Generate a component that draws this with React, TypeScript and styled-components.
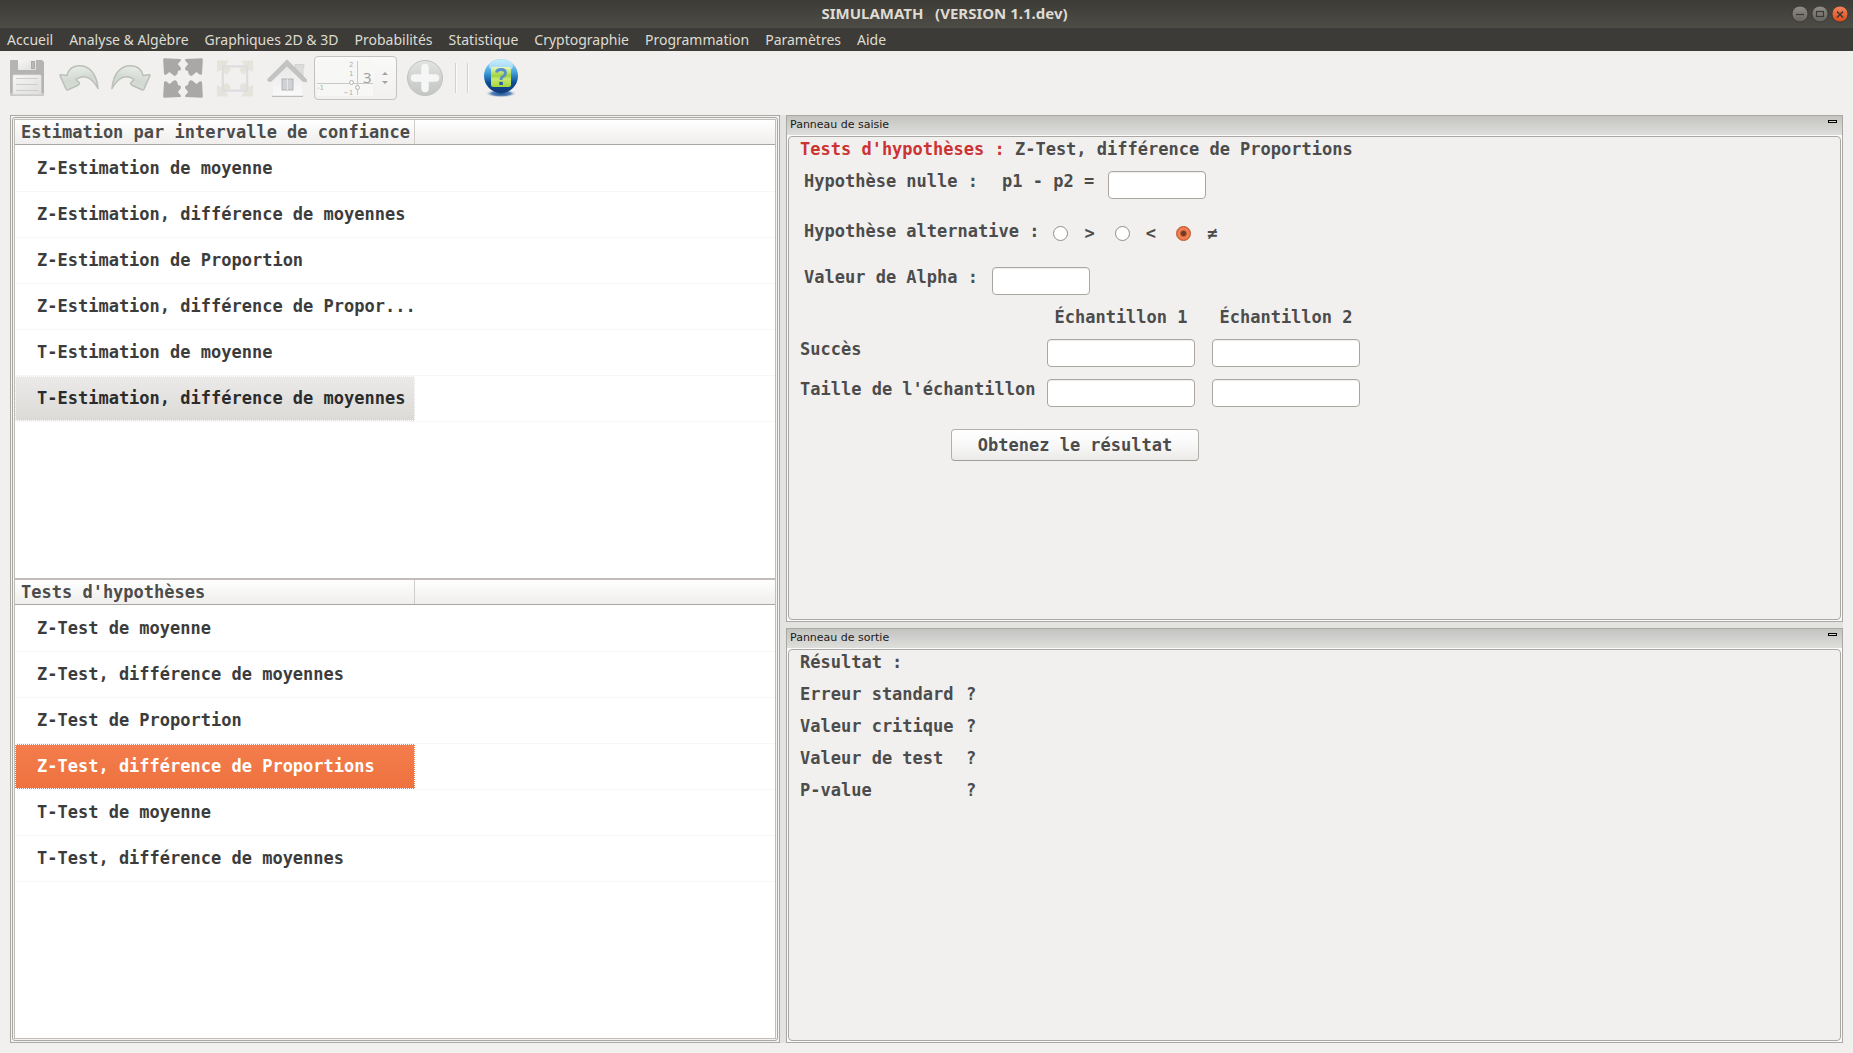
import React, { useState } from "react";
import styled, { createGlobalStyle, css } from "styled-components";

const GlobalStyle = createGlobalStyle`
  *, *::before, *::after { box-sizing: border-box; }
  body { margin: 0; background: #f1f0ee; }
  button, input { font: inherit; color: inherit; margin: 0; }
`;

const MONO = `"DejaVu Sans Mono", "Liberation Mono", monospace`;
const UI = `"Noto Sans", "Open Sans", sans-serif`;

const Window = styled.div`
  display: flex;
  flex-direction: column;
  min-height: 100vh;
  background: #f1f0ee;
  color: #4c4c4c;
  font: bold 17px/20px ${MONO};
`;

const TitleBar = styled.header`
  display: flex;
  align-items: center;
  height: 28px;
  padding: 0 4px 0 98px;
  background: linear-gradient(#3c3b37, #4d4c45);
`;

const Title = styled.h1`
  flex: 1;
  margin: 0;
  padding-bottom: 2px;
  color: #dfdbd2;
  font: bold 15px/20px ${UI};
  text-align: center;
  white-space: pre;
`;

const WindowButtons = styled.div`
  display: flex;
  gap: 2px;
`;

const WindowButton = styled.button`
  width: 18px;
  height: 18px;
  padding: 0;
  border: 0;
  background: none;
  svg { display: block; }
`;

const MenuBar = styled.nav`
  display: flex;
  gap: 16px;
  height: 23px;
  padding: 0 7px;
  background: #3c3b37;
`;

const MenuItem = styled.button`
  padding: 0;
  border: 0;
  background: none;
  color: #dfdbd2;
  font: 14px/23px ${UI};
  white-space: nowrap;
`;

const ToolBar = styled.div`
  display: flex;
  align-items: center;
  height: 54px;
  padding-left: 1px;
`;

const ToolButton = styled.button`
  display: flex;
  align-items: center;
  justify-content: center;
  width: 52px;
  height: 48px;
  padding: 0;
  border: 0;
  background: none;
`;

const Separator = styled.span`
  width: 2px;
  height: 30px;
  margin-left: 4px;
  margin-right: 6px;
  border-left: 1px solid #d3d1ce;
  border-right: 1px solid #fbfbfa;
`;

const SpinBox = styled.div`
  display: flex;
  align-items: center;
  width: 83px;
  height: 44px;
  margin: 0 2px 0 1px;
  border: 1px solid #c4c2bf;
  border-radius: 4px;
  background: linear-gradient(#fafafa, #f1f0ee);
`;

const SpinInput = styled.input`
  width: 66px;
  height: 40px;
  padding: 0 0 2px 48px;
  border: 0;
  background: none;
  color: #a5a29f;
  font: 15px/20px ${UI};
`;

const SpinField = styled.div`
  display: grid;
  width: 66px;
  & > * { grid-area: 1 / 1; }
`;

const Workspace = styled.main`
  flex: 1;
  display: grid;
  grid-template-columns: 770fr 1057fr;
  gap: 6px;
  margin: 10px;
  background: #e3e3e1;
`;

const Outline = styled.section`
  display: flex;
  padding: 1px;
  border: 1px solid #a9a8a4;
  background: #f4f3f2;
`;

const Frame = styled.div`
  flex: 1;
  display: flex;
  padding: 1px;
  border: 1px solid #a9a8a4;
  border-radius: 3px;
`;

const Lists = styled.div`
  flex: 1;
  display: flex;
  flex-direction: column;
  gap: 2px;
  border: 1px solid #c2bdb9;
  background: #c2bdb9;
`;

const Tree = styled.section`
  flex: 1 1 0;
  background: #ffffff;
`;

const TreeHeader = styled.header`
  display: flex;
  height: 25px;
  border-bottom: 1px solid #a9a6a2;
  background: linear-gradient(#ffffff, #efeeec);
`;

const HeaderTitle = styled.h2`
  width: 400px;
  margin: 0;
  padding-left: 6px;
  border-right: 1px solid #cfcdca;
  font: inherit;
  line-height: 24px;
  white-space: nowrap;
`;

const TreeItems = styled.ul`
  margin: 0;
  padding: 1px 0 0;
  list-style: none;
`;

const TreeItem = styled.li`
  height: 46px;
  border-bottom: 1px solid #f7f7f6;
`;

type Tone = "none" | "idle" | "active";

const tones = {
  none: css`
    background: none;
    color: #3c3c3c;
  `,
  idle: css`
    background: linear-gradient(#ebeae9, #dbdad7);
    color: #2c2c2c;
    outline: 1px dotted #ffffff;
  `,
  active: css`
    background: linear-gradient(#f47d4d, #ed723f);
    color: #ffffff;
    outline: 1px dotted #ffffff;
  `,
};

const TreeButton = styled.button<{ $tone: Tone }>`
  display: block;
  width: 400px;
  height: 45px;
  padding: 0 0 2px 22px;
  border: 0;
  text-align: left;
  white-space: nowrap;
  outline-offset: -1px;
  ${(p) => tones[p.$tone]}
`;

const Docks = styled.div`
  display: flex;
  flex-direction: column;
  gap: 6px;
`;

const DockBox = styled.section<{ $share: number }>`
  flex: ${(p) => p.$share} 1 0;
  display: flex;
  flex-direction: column;
  border: 1px solid #a9a8a4;
  background: #fbfbfb;
`;

const DockTitle = styled.header`
  display: flex;
  justify-content: space-between;
  height: 19px;
  padding: 0 5px 0 3px;
  background: linear-gradient(#c3c3c0, #dededc);
`;

const DockName = styled.h2`
  margin: 0;
  color: #1a1a1a;
  font: 11px/18px "DejaVu Sans", sans-serif;
`;

const Collapse = styled.button`
  width: 9px;
  height: 3px;
  margin-top: 4px;
  padding: 0;
  border: 1px solid #000000;
  background: #dcdcdc;
`;

const DockBody = styled.div`
  flex: 1;
  margin: 1px;
  padding: 2px 11px;
  border: 1px solid #a9a8a4;
  border-radius: 4px;
  background: #f1f0ee;
`;

const Form = styled.form`
  display: flex;
  flex-direction: column;
  gap: 12px;
`;

const FormTitle = styled.h3`
  margin: 0;
  font: inherit;
`;

const Accent = styled.span`
  color: #cc3333;
`;

const Hypotheses = styled.div`
  display: flex;
  flex-direction: column;
  gap: 20px;
  padding-left: 4px;
`;

const Line = styled.div`
  display: flex;
  align-items: flex-start;
  gap: 14px;
  height: 28px;
`;

const LineLabel = styled.label`
  display: flex;
  gap: 24px;
`;

const GroupLabel = styled.span`
  line-height: 24px;
`;

const TextBox = styled.input<{ $wide?: boolean }>`
  width: ${(p) => (p.$wide ? 148 : 98)}px;
  height: 28px;
  padding: 0 6px;
  border: 1px solid #aaa7a3;
  border-radius: 4px;
  background: #ffffff;
  box-shadow: inset 0 1px 1px #eeedeb;
  outline: 0;
`;

const RadioGroup = styled.div`
  display: flex;
  gap: 20px;
`;

const RadioLabel = styled.label`
  display: flex;
  align-items: center;
  gap: 16px;
  height: 28px;
`;

const Radio = styled.input`
  appearance: none;
  width: 15px;
  height: 15px;
  border: 1px solid #8f8c88;
  border-radius: 50%;
  background: #ffffff;
  &:checked {
    border-color: #b9502a;
    background: radial-gradient(circle, #74371f 0 2px, #f48457 4px, #ee7646 6px);
  }
`;

const SampleGrid = styled.div`
  display: grid;
  grid-template-columns: 230px 148px 148px;
  gap: 12px 17px;
  white-space: nowrap;
`;

const SampleHead = styled.span`
  text-align: center;
`;

const Actions = styled.div`
  display: flex;
  padding: 10px 0 0 151px;
`;

const Submit = styled.button`
  width: 248px;
  height: 32px;
  padding: 0;
  border: 1px solid #b4b1ad;
  border-bottom-color: #a09d99;
  border-radius: 4px;
  background: linear-gradient(#ffffff, #f8f8f8 50%, #ebeae8);
`;

const Results = styled.dl`
  display: grid;
  grid-template-columns: 150px 1fr;
  gap: 12px 16px;
  margin: 12px 0 0;
  white-space: nowrap;
`;

const Term = styled.dt``;

const Value = styled.dd`
  margin: 0;
`;

const MENUS = [
  "Accueil",
  "Analyse & Algèbre",
  "Graphiques 2D & 3D",
  "Probabilités",
  "Statistique",
  "Cryptographie",
  "Programmation",
  "Paramètres",
  "Aide",
];

const ESTIMATIONS = [
  "Z-Estimation de moyenne",
  "Z-Estimation, différence de moyennes",
  "Z-Estimation de Proportion",
  "Z-Estimation, différence de Propor...",
  "T-Estimation de moyenne",
  "T-Estimation, différence de moyennes",
];

const TESTS = [
  "Z-Test de moyenne",
  "Z-Test, différence de moyennes",
  "Z-Test de Proportion",
  "Z-Test, différence de Proportions",
  "T-Test de moyenne",
  "T-Test, différence de moyennes",
];

const RESULTS = ["Erreur standard", "Valeur critique", "Valeur de test", "P-value"];

function WindowIcon({ kind }: { kind: "min" | "max" | "close" }) {
  const close = kind === "close";
  return (
    <svg width="18" height="18" viewBox="0 0 18 18">
      <defs>
        <linearGradient id={`wb-${kind}`} x1="0" y1="0" x2="0" y2="1">
          <stop offset="0" stopColor={close ? "#f58561" : "#908e87"} />
          <stop offset="1" stopColor={close ? "#dc4a16" : "#65635c"} />
        </linearGradient>
      </defs>
      <circle cx="9" cy="9" r="8" fill={`url(#wb-${kind})`} stroke="#35342f" strokeWidth="0.8" />
      <g stroke="#3a3935" strokeWidth="1.2" fill="none">
        {kind === "min" && <path d="M5 9.5h8" />}
        {kind === "max" && <rect x="5.5" y="6.5" width="7" height="5" />}
        {close && <path d="M6 6.5l6 6M12 6.5l-6 6" strokeWidth="1.6" />}
      </g>
    </svg>
  );
}

function SaveIcon() {
  return (
    <svg width="36" height="38" viewBox="0 0 36 38">
      <defs>
        <linearGradient id="save-paper" x1="0" y1="0" x2="1" y2="1">
          <stop offset="0" stopColor="#f6f6f6" />
          <stop offset="1" stopColor="#dededd" />
        </linearGradient>
      </defs>
      <path d="M1 2q0-1 1-1h31l2 2v33q0 1-1 1H2q-1 0-1-1z" fill="#b5b4b2" />
      <path d="M1 34h34v2q0 1-1 1H2q-1 0-1-1z" fill="#cccac8" />
      <path d="M9 1h18v10H10q-1 0-1-1z" fill="url(#save-paper)" />
      <rect x="22.5" y="2.5" width="3" height="7" fill="#b9b8b7" stroke="#a3a2a1" strokeWidth="0.8" />
      <rect x="4" y="16" width="28" height="19" rx="1" fill="url(#save-paper)" stroke="#e8e8e8" strokeWidth="0.6" />
      <path d="M7 19.5h22M7 25.5h22M7 31.5h22" stroke="#cecdcc" />
    </svg>
  );
}

function UndoIcon({ flip = false }: { flip?: boolean }) {
  const id = flip ? "redo-fill" : "undo-fill";
  return (
    <svg width="40" height="28" viewBox="0 0 40 28">
      <defs>
        <linearGradient id={id} x1="0.2" y1="0" x2="0.5" y2="1">
          <stop offset="0" stopColor="#ecefec" />
          <stop offset="0.6" stopColor="#d2d9d1" />
          <stop offset="1" stopColor="#d8ddd7" />
        </linearGradient>
      </defs>
      <path
        transform={flip ? "matrix(-1 0 0 1 40 0)" : undefined}
        d="M39 24.5C37.500 8 29 1.500 20 1.800C14 2 9.500 5 8 11.500L1.500 10.800Q.8 11 1.200 12L7 25Q7.600 26.300 9 25.800L18.500 21.500Q20.500 20.500 20.500 19L17 15.500C24.500 9.500 33 13.500 39 24.500Z"
        fill={`url(#${id})`}
        stroke="#babfb9"
        strokeWidth="1.500"
        strokeLinejoin="round"
      />
    </svg>
  );
}

const CORNER =
  "M1 .3L17.500 1Q18.500 1.800 17.500 3L14.800 6L17.800 9.800Q18.400 11.500 17.200 12.300L15 13L14.300 16L12.600 17.700Q11.500 18.200 10.400 17.200L6.500 14L3.500 16.500Q1.500 17.500 1 15.800L.2 2Q.2.500 1 .3Z";
const QUARTERS = [
  undefined,
  "matrix(-1 0 0 1 40 0)",
  "matrix(1 0 0 -1 0 40)",
  "matrix(-1 0 0 -1 40 40)",
];

function ExpandIcon() {
  return (
    <svg width="40" height="40" viewBox="0 0 40 40" fill="#a9a8a7">
      {QUARTERS.map((t, i) => (
        <path key={i} d={CORNER} transform={t} />
      ))}
    </svg>
  );
}

function FitIcon() {
  return (
    <svg width="36" height="37" viewBox="0 0 40 40">
      <g fill="#e5e4da">
        {QUARTERS.map((t, i) => (
          <path key={i} transform={t} d="M0 0H13L10.500 4L11 6L15.500 9.500L13 14L9.500 15.500L6 11L4 10.500L0 13Z" />
        ))}
      </g>
      <rect x="6.5" y="6.5" width="27" height="27" fill="none" stroke="#dddde0" strokeWidth="2.4" />
    </svg>
  );
}

function HomeIcon() {
  return (
    <svg width="40" height="38" viewBox="0 0 40 38">
      <defs>
        <linearGradient id="home-wall" x1="0" y1="0" x2="0" y2="1">
          <stop offset="0" stopColor="#e6e6e6" />
          <stop offset="1" stopColor="#fafafa" />
        </linearGradient>
      </defs>
      <path d="M28 5.500h9v3h-1v11l-8-8z" fill="#dcdcdb" stroke="#cfcfce" strokeWidth="0.8" />
      <path d="M6 20L20 5L35 20V37H6Z" fill="url(#home-wall)" />
      <path d="M5 37.500h31" stroke="#bdbdbc" strokeWidth="1.500" />
      <path d="M20 .8L39.500 20.500V23L36 22.500L20 7L4 22.500L.8 22V20Z" fill="#c3c3c2" stroke="#b8b8b7" strokeWidth="0.6" />
      <rect x="15" y="20" width="11" height="11" fill="#cfd1d4" stroke="#b3b3b2" />
      <path d="M20.500 20v11" stroke="#e8e8e8" />
    </svg>
  );
}

function AxesPicture() {
  return (
    <svg width="66" height="40" viewBox="0 0 66 40">
      <rect x="2" y="2" width="56" height="36" fill="#f7f7f6" />
      <g stroke="#c9c9c9" fill="none">
        <path d="M2 25.500h56M42.500 3v34" />
        <circle cx="36.500" cy="24.500" r="2" fill="#f7f7f6" stroke="#b5b5b5" />
        <circle cx="42.500" cy="29.500" r="2" fill="#f7f7f6" stroke="#b5b5b5" />
      </g>
      <g fill="#adadad" fontFamily="DejaVu Sans, sans-serif" fontSize="7" fontWeight="400">
        <text x="34" y="9">2</text>
        <text x="34" y="18">1</text>
        <text x="2" y="32">-1</text>
        <text x="28" y="37">−1</text>
      </g>
    </svg>
  );
}

function SpinArrows() {
  return (
    <svg width="8" height="16" viewBox="0 0 8 16" fill="#a3a19f">
      <path d="M1 5h6L4 2zM1 11h6L4 14z" />
    </svg>
  );
}

function PlusIcon() {
  return (
    <svg width="38" height="38" viewBox="0 0 38 38">
      <defs>
        <linearGradient id="plus-disc" x1="0" y1="0" x2="0" y2="1">
          <stop offset="0" stopColor="#e2e4e2" />
          <stop offset="0.5" stopColor="#d0d3d0" />
          <stop offset="1" stopColor="#c3c7c3" />
        </linearGradient>
      </defs>
      <circle cx="19" cy="19" r="17.500" fill="url(#plus-disc)" stroke="#bfc2bf" />
      <path d="M19 8.500v21M8.500 19h21" stroke="#f6f6f6" strokeWidth="7.500" strokeLinecap="round" />
    </svg>
  );
}

function HelpIcon() {
  return (
    <svg width="36" height="40" viewBox="0 0 36 40">
      <defs>
        <linearGradient id="help-ball" x1="0" y1="0" x2="0" y2="1">
          <stop offset="0" stopColor="#a8e2fa" />
          <stop offset="0.4" stopColor="#3f9fdd" />
          <stop offset="0.7" stopColor="#0c4b94" />
          <stop offset="1" stopColor="#123a78" />
        </linearGradient>
        <linearGradient id="help-card" x1="0" y1="0" x2="0" y2="1">
          <stop offset="0" stopColor="#eaf7c4" />
          <stop offset="0.45" stopColor="#9ed43a" />
          <stop offset="0.6" stopColor="#c8e870" />
          <stop offset="1" stopColor="#a4d63c" />
        </linearGradient>
        <radialGradient id="help-shadow">
          <stop offset="0" stopColor="#1c4f92" />
          <stop offset="0.6" stopColor="#5b85b8" />
          <stop offset="1" stopColor="#f1f0ee" stopOpacity="0" />
        </radialGradient>
      </defs>
      <ellipse cx="18" cy="35.500" rx="16" ry="4" fill="url(#help-shadow)" />
      <circle cx="18" cy="18" r="17" fill="url(#help-ball)" />
      <ellipse cx="18" cy="8" rx="12" ry="6.500" fill="#d8f3fe" opacity="0.6" />
      <rect x="8" y="9" width="20" height="20" rx="2.500" fill="url(#help-card)" />
      <path d="M13.500 14.500Q14 11.500 18 11.500Q22.500 11.500 22.500 15Q22.500 17 20 18.500Q18 19.500 18 22" fill="none" stroke="#5591c8" strokeWidth="2.800" />
      <rect x="16.300" y="23.800" width="3.600" height="3.200" fill="#2b62a4" />
    </svg>
  );
}

interface TreePanelProps {
  title: string;
  items: string[];
  selected: number;
  tone: Tone;
  onSelect: (index: number) => void;
}

function TreePanel({ title, items, selected, tone, onSelect }: TreePanelProps) {
  return (
    <Tree>
      <TreeHeader>
        <HeaderTitle>{title}</HeaderTitle>
      </TreeHeader>
      <TreeItems>
        {items.map((item, i) => (
          <TreeItem key={item}>
            <TreeButton type="button" $tone={i === selected ? tone : "none"} onClick={() => onSelect(i)}>
              {item}
            </TreeButton>
          </TreeItem>
        ))}
      </TreeItems>
    </Tree>
  );
}

function Dock({ title, share, children }: { title: string; share: number; children: React.ReactNode }) {
  return (
    <DockBox $share={share}>
      <DockTitle>
        <DockName>{title}</DockName>
        <Collapse type="button" aria-label="Réduire" />
      </DockTitle>
      <DockBody>{children}</DockBody>
    </DockBox>
  );
}

export default function App() {
  const [estimation, setEstimation] = useState(5);
  const [test, setTest] = useState(3);
  const [activeTree, setActiveTree] = useState<"estimation" | "test">("test");
  const [alternative, setAlternative] = useState("≠");

  return (
    <Window>
      <GlobalStyle />
      <TitleBar>
        <Title>{"SIMULAMATH   (VERSION 1.1.dev)"}</Title>
        <WindowButtons>
          <WindowButton aria-label="Minimiser"><WindowIcon kind="min" /></WindowButton>
          <WindowButton aria-label="Agrandir"><WindowIcon kind="max" /></WindowButton>
          <WindowButton aria-label="Fermer"><WindowIcon kind="close" /></WindowButton>
        </WindowButtons>
      </TitleBar>
      <MenuBar>
        {MENUS.map((m) => (
          <MenuItem key={m} type="button">{m}</MenuItem>
        ))}
      </MenuBar>
      <ToolBar>
        <ToolButton disabled aria-label="Enregistrer"><SaveIcon /></ToolButton>
        <ToolButton disabled aria-label="Annuler"><UndoIcon /></ToolButton>
        <ToolButton disabled aria-label="Rétablir"><UndoIcon flip /></ToolButton>
        <ToolButton disabled aria-label="Plein écran"><ExpandIcon /></ToolButton>
        <ToolButton disabled aria-label="Ajuster"><FitIcon /></ToolButton>
        <ToolButton disabled aria-label="Vue initiale"><HomeIcon /></ToolButton>
        <SpinBox>
          <SpinField>
            <AxesPicture />
            <SpinInput disabled defaultValue="3" aria-label="Décimales" />
          </SpinField>
          <SpinArrows />
        </SpinBox>
        <ToolButton disabled aria-label="Ajouter"><PlusIcon /></ToolButton>
        <Separator />
        <Separator />
        <ToolButton aria-label="Aide"><HelpIcon /></ToolButton>
      </ToolBar>
      <Workspace>
        <Outline>
          <Frame>
            <Lists>
              <TreePanel
                title="Estimation par intervalle de confiance"
                items={ESTIMATIONS}
                selected={estimation}
                tone={activeTree === "estimation" ? "active" : "idle"}
                onSelect={(i) => { setEstimation(i); setActiveTree("estimation"); }}
              />
              <TreePanel
                title="Tests d'hypothèses"
                items={TESTS}
                selected={test}
                tone={activeTree === "test" ? "active" : "idle"}
                onSelect={(i) => { setTest(i); setActiveTree("test"); }}
              />
            </Lists>
          </Frame>
        </Outline>
        <Docks>
          <Dock title="Panneau de saisie" share={507}>
            <Form onSubmit={(e) => e.preventDefault()}>
              <FormTitle>
                <Accent>Tests d'hypothèses :</Accent> Z-Test, différence de Proportions
              </FormTitle>
              <Hypotheses>
                <Line>
                  <LineLabel htmlFor="null-value">
                    <span>Hypothèse nulle :</span>
                    <span>p1 - p2 =</span>
                  </LineLabel>
                  <TextBox id="null-value" />
                </Line>
                <Line role="radiogroup" aria-labelledby="alternative">
                  <GroupLabel id="alternative">Hypothèse alternative :</GroupLabel>
                  <RadioGroup>
                    {[">", "<", "≠"].map((sign) => (
                      <RadioLabel key={sign}>
                        <Radio
                          type="radio"
                          name="alternative"
                          checked={alternative === sign}
                          onChange={() => setAlternative(sign)}
                        />
                        {sign}
                      </RadioLabel>
                    ))}
                  </RadioGroup>
                </Line>
                <Line>
                  <LineLabel htmlFor="alpha">Valeur de Alpha :</LineLabel>
                  <TextBox id="alpha" />
                </Line>
              </Hypotheses>
              <SampleGrid>
                <span />
                <SampleHead id="sample-1">Échantillon 1</SampleHead>
                <SampleHead id="sample-2">Échantillon 2</SampleHead>
                <label id="success" htmlFor="success-1">Succès</label>
                <TextBox $wide id="success-1" aria-labelledby="success sample-1" />
                <TextBox $wide id="success-2" aria-labelledby="success sample-2" />
                <label id="size" htmlFor="size-1">Taille de l'échantillon</label>
                <TextBox $wide id="size-1" aria-labelledby="size sample-1" />
                <TextBox $wide id="size-2" aria-labelledby="size sample-2" />
              </SampleGrid>
              <Actions>
                <Submit type="submit">Obtenez le résultat</Submit>
              </Actions>
            </Form>
          </Dock>
          <Dock title="Panneau de sortie" share={415}>
            <FormTitle>Résultat :</FormTitle>
            <Results>
              {RESULTS.map((name) => (
                <React.Fragment key={name}>
                  <Term>{name}</Term>
                  <Value>?</Value>
                </React.Fragment>
              ))}
            </Results>
          </Dock>
        </Docks>
      </Workspace>
    </Window>
  );
}
